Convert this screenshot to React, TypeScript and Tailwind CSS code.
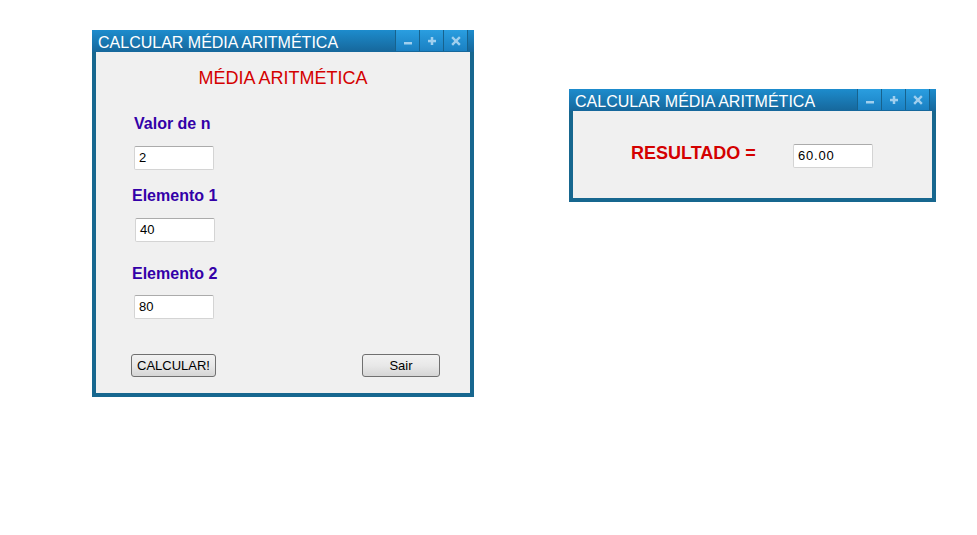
import React from "react";

const font = { fontFamily: '"Liberation Sans", Arial, sans-serif' };

function TitleButtons() {
  return (
    <div className="flex h-[21px] border-l border-[#17628d]">
      {[0, 1, 2].map((i) => (
        <div
          key={i}
          className="w-[24px] h-full flex items-center justify-center bg-gradient-to-b from-[#2a9ee0] to-[#1a80c2] border-r border-[#17628d]"
        >
          <svg width="12" height="12" viewBox="0 0 12 12">
            {i === 0 && <rect x="2" y="7" width="8" height="2.5" fill="#a0cfee" />}
            {i === 1 && (
              <g fill="#a0cfee">
                <rect x="2" y="4.8" width="8" height="2.5" />
                <rect x="4.75" y="2" width="2.5" height="8" />
              </g>
            )}
            {i === 2 && (
              <g stroke="#a0cfee" strokeWidth="2.4" strokeLinecap="square">
                <line x1="3" y1="3" x2="9" y2="9" />
                <line x1="9" y1="3" x2="3" y2="9" />
              </g>
            )}
          </svg>
        </div>
      ))}
    </div>
  );
}

function TitleBar() {
  return (
    <div className="h-[22px] flex items-start justify-between bg-gradient-to-b from-[#1d8ccd] to-[#16679b]">
      <span className="text-white text-[16px] leading-[22px] pl-[6px] pt-[2px]" style={font}>
        CALCULAR MÉDIA ARITMÉTICA
      </span>
      <div className="flex pr-[6px]">
        <TitleButtons />
      </div>
    </div>
  );
}

function Field({ value, track }: { value: string; track?: boolean }) {
  return (
    <div
      className={`w-[80px] h-[24px] bg-white border border-[#d4d4d4] border-t-[#ababab] rounded-[2px] flex items-center pl-[4px] text-[13px] text-black ${
        track ? "tracking-[0.8px]" : ""
      }`}
      style={font}
    >
      {value}
    </div>
  );
}

function Btn({ label, w }: { label: string; w: string }) {
  return (
    <div
      className={`${w} h-[23px] flex items-center justify-center rounded-[3px] border border-[#707070] bg-gradient-to-b from-[#f2f2f2] via-[#e8e8e8] to-[#d6d6d6] text-[13px] text-black`}
      style={font}
    >
      {label}
    </div>
  );
}

export default function App() {
  return (
    <div className="relative w-[977px] h-[535px] bg-white overflow-hidden" style={font}>
      {/* Window 1 */}
      <div className="absolute left-[92px] top-[30px] w-[382px] bg-[#17678f] flex flex-col">
        <TitleBar />
        <div className="mx-[4px] mb-[4px] h-[341px] bg-[#f0f0f0] flex flex-col">
          <div className="mt-[16px] text-center text-[18px] leading-[20px] text-[#d40000]">
            MÉDIA ARITMÉTICA
          </div>
          <div className="ml-[38px] mt-[27px] text-[16px] leading-[18px] font-bold text-[#3300a8]">
            Valor de n
          </div>
          <div className="ml-[38px] mt-[13px]">
            <Field value="2" />
          </div>
          <div className="ml-[36px] mt-[17px] text-[16px] leading-[18px] font-bold text-[#3300a8]">
            Elemento 1
          </div>
          <div className="ml-[39px] mt-[13px]">
            <Field value="40" />
          </div>
          <div className="ml-[36px] mt-[23px] text-[16px] leading-[18px] font-bold text-[#3300a8]">
            Elemento 2
          </div>
          <div className="ml-[38px] mt-[12px]">
            <Field value="80" />
          </div>
          <div className="mt-[35px] ml-[35px] mr-[30px] flex justify-between">
            <Btn label="CALCULAR!" w="w-[85px]" />
            <Btn label="Sair" w="w-[78px]" />
          </div>
        </div>
      </div>

      {/* Window 2 */}
      <div className="absolute left-[569px] top-[89px] w-[367px] bg-[#17678f] flex flex-col">
        <TitleBar />
        <div className="mx-[4px] mb-[4px] h-[87px] bg-[#f0f0f0] flex items-start">
          <div className="ml-[58px] mt-[32px] w-[162px] text-[18px] leading-[20px] font-bold text-[#d40000] whitespace-nowrap">
            RESULTADO =
          </div>
          <div className="mt-[33px]">
            <Field value="60.00" track />
          </div>
        </div>
      </div>
    </div>
  );
}
